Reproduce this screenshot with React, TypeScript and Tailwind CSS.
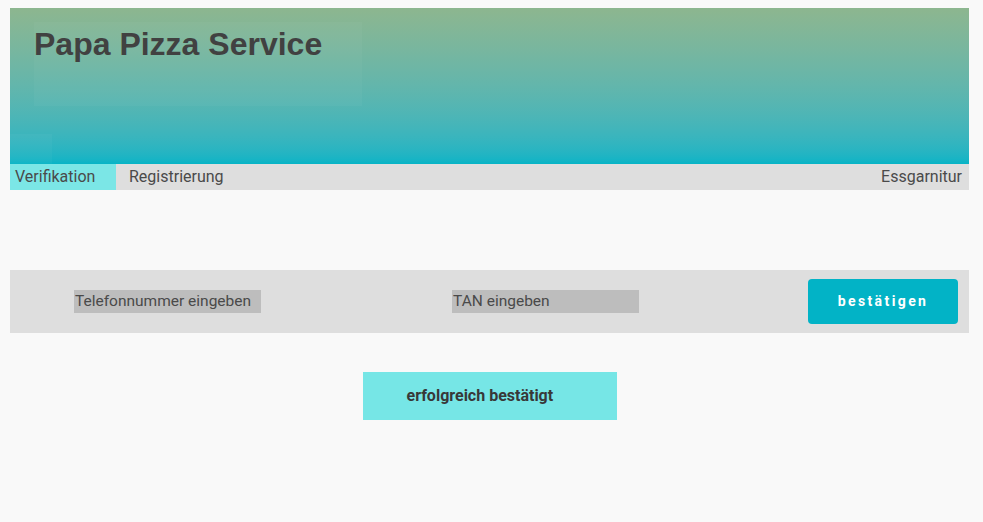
import React from 'react'

export default function App() {
  return (
    <div className="min-h-[522px] w-full bg-[#f9f9f9] pt-2 px-[10px] text-[#444]" style={{ fontFamily: 'Roboto, "Liberation Sans", sans-serif' }}>
      <div className="w-[959px]">
        {/* Kopfbereich */}
        <header className="relative h-[156px] bg-gradient-to-b from-[#8db68f] to-[#06b4c6]">
          <div className="absolute left-6 top-[14px] w-[328px] h-[84px] bg-white/[0.03]" />
          <div className="absolute left-0 bottom-0 w-[42px] h-[30px] bg-white/[0.03]" />
          <h1
            className="relative pl-6 pt-[17px] text-[32px] leading-[38px] font-bold text-[#414141]"
            style={{ fontFamily: '"Liberation Sans", Arial, sans-serif' }}
          >
            Papa Pizza Service
          </h1>
        </header>

        {/* Navigation */}
        <nav className="flex h-[26px] items-center bg-[#dedede] text-[16px] text-[#4a4a4a]">
          <a className="flex h-full w-[106px] items-center bg-[#7be6e6] pl-[5px]">Verifikation</a>
          <a className="ml-[13px] flex h-full items-center">Registrierung</a>
          <a className="ml-auto flex h-full items-center pr-[7px]">Essgarnitur</a>
        </nav>

        {/* Formular */}
        <form className="mt-20 flex h-[63px] items-center bg-[#dedede]">
          <input
            placeholder="Telefonnummer eingeben"
            className="ml-16 h-[23px] w-[187px] bg-[#bdbdbd] pl-px text-[15.5px] text-[#444] placeholder:text-[#4a4a4a] outline-none"
          />
          <input
            placeholder="TAN eingeben"
            className="ml-[191px] h-[23px] w-[187px] bg-[#bdbdbd] pl-px text-[15.5px] text-[#444] placeholder:text-[#4a4a4a] outline-none"
          />
          <button
            type="button"
            className="ml-auto mr-[11px] h-[45px] w-[150px] rounded-[4px] bg-[#02b3c6] text-[14px] font-bold tracking-[2.4px] text-white"
          >
            bestätigen
          </button>
        </form>

        {/* Meldung */}
        <div className="mt-[39px] flex justify-center">
          <div className="flex h-12 w-[254px] items-center bg-[#76e6e6] pl-11 text-[16px] font-bold text-[#383838]">
            erfolgreich bestätigt
          </div>
        </div>
      </div>
    </div>
  )
}
